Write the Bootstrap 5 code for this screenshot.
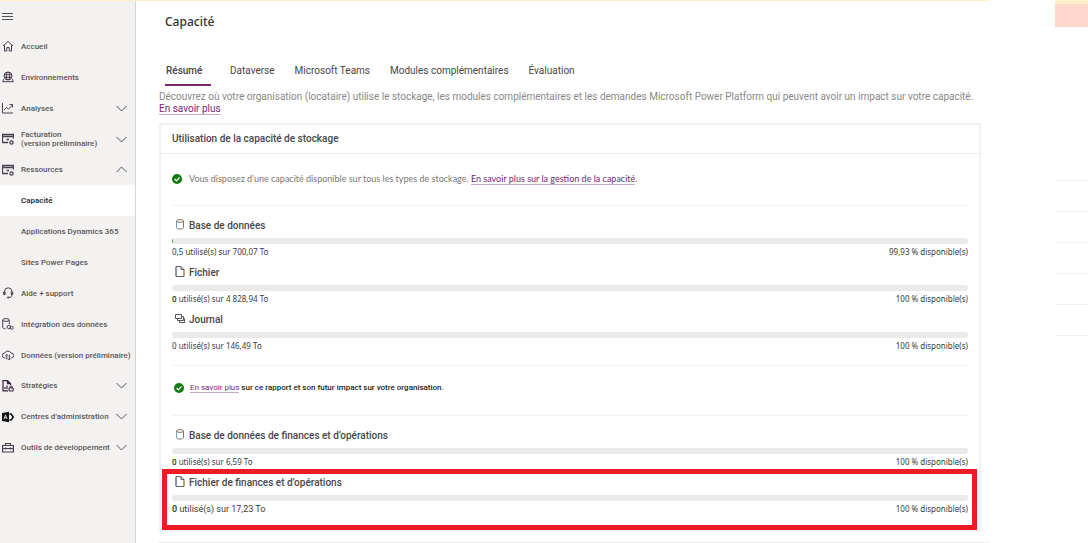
<!DOCTYPE html>
<html lang="fr">
<head>
<meta charset="utf-8">
<meta name="viewport" content="width=device-width, initial-scale=1">
<title>Capacité</title>
<link href="https://cdn.jsdelivr.net/npm/bootstrap@5.3.0/dist/css/bootstrap.min.css" rel="stylesheet">
<style>
  body { font-family: Roboto, "Noto Sans", sans-serif; font-size: 10px; line-height: 12px; color: #3b3a39; background: #fff; }
  svg { flex: none; fill: none; stroke: #4b3f52; }
  a { color: #742774; text-decoration: none; }
  a:hover { color: #4b164b; }
  .shell { border-top: 1px solid #fff0cc; margin-right: 66px; min-width: 0; }
  .sidebar { width: 136px; background: #f3f2f1; border-right: 1px solid #d6d5d8; }
  .menu-btn { width: 16px; height: 32px; padding: 0; border: 0; background: none; margin-bottom: -2px; }
  .side-list { min-height: 432px; }
  .side-link { display: flex; align-items: center; flex: 1 1 0; color: #5a5856; font-size: 8px; line-height: 9px; font-weight: 500; padding: 0 8px 0 2px; white-space: nowrap; }
  .side-link span { margin-left: 7px; }
  .side-link.sub { padding-left: 14px; }
  .side-link.current { background: #fff; color: #323130; font-weight: 600; }
  .chev { margin-left: auto; stroke: #55535a; }
  .page { padding: 0 8px 0 23px; }
  h1 { font: 500 12px/20px "Noto Sans", sans-serif; margin: 11px 0 23px 6px; color: #323130; }
  .tabs { gap: 19px; margin: 0 0 5px 6px; }
  .tabs a { color: #484644; height: 31px; line-height: 32px; border-bottom: 2px solid transparent; padding: 0 0 0 1px; }
  .tabs a.active { border-color: #742774; font-weight: 500; width: 46px; margin-right: -1px; }
  .lead-in { color: #8a8886; margin: 0 0 8px; }
  .under { border-bottom: 1px solid #c9a5ca; }
  .usage { border: 2px solid #f0f0f0; border-radius: 3px; --bs-card-color: inherit; }
  .usage h2 { font-size: 10px; font-weight: 500; line-height: 28px; margin: 0; padding: 0 11px; border-bottom: 1px solid #ebe9e8; color: #484644; }
  .usage-body { padding: 0 11px 7px; }
  .notice { height: 51px; gap: 7px; }
  .notice.wide { font: 9px/12px Lato, sans-serif; color: #797775; padding-bottom: 2px; }
  .notice.tight { height: 49px; gap: 6px; padding: 0 0 5px 2px; font-size: 8px; font-weight: 500; color: #201f1e; }
  .meters { border-top: 1px solid #f3f2f1; padding-top: 13px; }
  .meters-first { padding-bottom: 5px; }
  .meter { position: relative; height: 47px; }
  .meter h3 { font-size: 10px; font-weight: 500; line-height: 14px; margin: 0 0 5px; gap: 4px; padding-left: 3px; color: #484644; }
  .meter h3 svg { margin-bottom: 3px; }
  .progress { height: 6px; border-radius: 3px; background: #ebeae8; margin-bottom: 2px; }
  .progress-bar { background: #4ca64c; }
  .figures { font: 8px/12px "Noto Sans", sans-serif; }
  .figures b { font-weight: 600; }
  .figures .roomy { font: 9px/12px Roboto, sans-serif; }
  .marker { position: absolute; inset: -7px -9px -7px -10px; border: 5px solid #ed1c24; pointer-events: none; }
  .next-panel { border-top: 2px solid #ebebeb; margin: 10px -8px 0 0; }
  .rail { width: 33px; flex: none; }
  .rail-warn { height: 4px; background: #fff0cc; }
  .rail-error { height: 23px; background: #ffd7cc; margin-bottom: 153px; }
  .rail-row { height: 31px; border-top: 1px solid #f0efee; }
</style>
</head>
<body>
<svg class="d-none">
  <symbol id="chev-down" viewBox="0 0 11 7"><path d="M.5 1 5.5 6l5-5"/></symbol>
  <symbol id="db" viewBox="0 0 9 11"><path d="M1 2v6.500c0 .8 1.200 1.500 3.500 1.500S8 9.300 8 8.500V2" stroke="#76757c"/><ellipse cx="4.500" cy="2" rx="3.500" ry="1.400" stroke="#8b7565"/><path d="M1 3v5" stroke="#6fa5cf"/></symbol>
  <symbol id="file" viewBox="0 0 9 11"><path d="M.5.500h5l3 3v7h-8z" stroke="#625f66"/><path d="M5.500.500v3h3" stroke="#625f66"/><path d="M.500 1v9" stroke="#627e9f"/><path d="M8.500 5v5" stroke="#c99258"/></symbol>
  <symbol id="ok" viewBox="0 0 10 10"><circle cx="5" cy="5" r="5" fill="#107c10" stroke="none"/><path d="m2.600 5 1.800 1.800L7.500 3.500" stroke="#fff" stroke-width="1.200"/></symbol>
  <symbol id="bill" viewBox="0 0 12 12"><path d="M6 9.500H.5v-8h11v4M.5 3.500h11M4.500 6.500h2.500" stroke-width="1.300"/><circle cx="9.500" cy="9.500" r="1.600" stroke-width="1.300"/></symbol>
</svg>
<div class="d-flex min-vh-100">
  <div class="shell d-flex flex-grow-1">
    <nav class="sidebar d-flex flex-column flex-shrink-0" aria-label="Navigation principale">
      <button class="menu-btn d-flex align-items-center" type="button" aria-label="Menu"><svg width="14" height="10" viewBox="0 0 14 10"><path d="M2 1.500h11M2 4.500h11M2 7.500h11" stroke="#555"/></svg></button>
      <div class="side-list d-flex flex-column">
        <a class="side-link" href="#"><svg width="12" height="12" viewBox="0 0 12 12"><path d="M1 6 6 1.500 11 6M2.500 5v6h2.300V7.500h2.400V11h2.300V5"/></svg><span>Accueil</span></a>
        <a class="side-link" href="#"><svg width="12" height="12" viewBox="0 0 12 12"><circle cx="6" cy="5" r="4"/><ellipse cx="6" cy="5" rx="1.700" ry="4"/><path d="M2.300 3.800h7.400M2.300 6.300h7.400M1.800 8 .7 10.700h10.600L10.200 8"/></svg><span>Environnements</span></a>
        <a class="side-link" href="#"><svg width="12" height="12" viewBox="0 0 12 12"><path d="M.5 1v10H11M2 8l2.500-2.500 2 1.500L10.500 3M7.500 2.500h3v3"/></svg><span>Analyses</span><svg class="chev" width="11" height="7"><use href="#chev-down"/></svg></a>
        <a class="side-link" href="#"><svg width="12" height="12"><use href="#bill"/></svg><span>Facturation<br>(version préliminaire)</span><svg class="chev" width="11" height="7"><use href="#chev-down"/></svg></a>
        <a class="side-link" href="#"><svg width="12" height="12"><use href="#bill"/></svg><span>Ressources</span><svg class="chev" width="11" height="7" viewBox="0 0 11 7"><path d="m.5 6 5-5 5 5"/></svg></a>
        <a class="side-link sub current" href="#" aria-current="page"><span>Capacité</span></a>
        <a class="side-link sub" href="#"><span>Applications Dynamics 365</span></a>
        <a class="side-link sub" href="#"><span>Sites Power Pages</span></a>
        <a class="side-link" href="#"><svg width="12" height="12" viewBox="0 0 12 12"><path d="M2.500 7.500V4.500a3.700 3.700 0 0 1 7.400 0v3M2.500 5H1.600v2.500h1.500V5zM9.900 5h.9v2.500H9.300V5zM9.900 7.500C9.900 9.500 9 10.500 7 10.500"/><circle cx="6.200" cy="10.500" r=".8"/></svg><span>Aide + support</span></a>
        <a class="side-link" href="#"><svg width="12" height="12" viewBox="0 0 12 12"><ellipse cx="4" cy="2" rx="3.300" ry="1.400"/><path d="M.7 2v7.500c0 .7 1.300 1.300 3 1.300M7.300 2v4"/><circle cx="6.800" cy="9" r="1.700"/><circle cx="9.700" cy="9.800" r="1.500"/></svg><span>Intégration des données</span></a>
        <a class="side-link" href="#"><svg width="12" height="12" viewBox="0 0 12 12"><path d="M3.500 9H3a2.500 2.500 0 0 1-.3-5A3.500 3.500 0 0 1 9 4a2.500 2.500 0 0 1 .3 5M4.800 10.500V5.500M3.500 6.800l1.300-1.300 1 1M7.300 5.500v5.500M6.300 9.800l1 1.200 1.200-1.200"/></svg><span>Données (version préliminaire)</span></a>
        <a class="side-link" href="#"><svg width="12" height="12" viewBox="0 0 12 12" style="stroke:#35203f"><path d="M6 10.800H1V.7h4.500L8.500 3.500V5M5.500.7v3h3M3 9V7M5 9V5.500" stroke-width="1.200"/><path d="M7 8h4.200v3H7zM8 8V6.800c0-1.200 2.200-1.200 2.200 0V8"/></svg><span>Stratégies</span><svg class="chev" width="11" height="7"><use href="#chev-down"/></svg></a>
        <a class="side-link" href="#"><svg width="12" height="12" viewBox="0 0 12 12"><path d="M0 2 7 .7v10.600L0 10z" fill="#111" stroke="none"/><path d="M2 8 3.500 4 5 8M2.500 6.800h2" stroke="#fff" stroke-width=".8"/><path d="M7.500 3h1.700l2 3-2 3H7.500" stroke="#111" stroke-width="1.500"/></svg><span>Centres d’administration</span><svg class="chev" width="11" height="7"><use href="#chev-down"/></svg></a>
        <a class="side-link" href="#"><svg width="12" height="12" viewBox="0 0 12 12"><path d="M.6 3.500h10.800v6.500H.6zM3.500 3.500v-2h5v2M.6 6.500h10.800M3.500 5.500v2M8.500 5.500v2" stroke-width="1.200"/></svg><span>Outils de développement</span><svg class="chev" width="11" height="7"><use href="#chev-down"/></svg></a>
      </div>
    </nav>
    <main class="page flex-grow-1">
      <h1>Capacité</h1>
      <nav class="tabs d-flex" aria-label="Sections">
        <a class="active" href="#" aria-current="true">Résumé</a>
        <a href="#">Dataverse</a>
        <a href="#">Microsoft Teams</a>
        <a href="#">Modules complémentaires</a>
        <a href="#">Évaluation</a>
      </nav>
      <p class="lead-in">Découvrez où votre organisation (locataire) utilise le stockage, les modules complémentaires et les demandes Microsoft Power Platform qui peuvent avoir un impact sur votre capacité.<br><a class="under" href="#">En savoir plus</a></p>
      <section class="card usage">
        <h2>Utilisation de la capacité de stockage</h2>
        <div class="usage-body">
          <div class="notice wide d-flex align-items-center"><svg width="10" height="10"><use href="#ok"/></svg><span>Vous disposez d’une capacité disponible sur tous les types de stockage. <a class="under" href="#">En savoir plus sur la gestion de la capacité</a>.</span></div>
          <div class="meters meters-first">
            <div class="meter">
              <h3 class="d-flex align-items-center"><svg width="10" height="11"><use href="#db"/></svg>Base de données</h3>
              <div class="progress" role="progressbar" aria-label="Base de données" aria-valuenow="0.07" aria-valuemin="0" aria-valuemax="100"><div class="progress-bar" style="width: .14%"></div></div>
              <div class="figures d-flex justify-content-between"><span>0,5 utilisé(s) sur 700,07 To</span><span>99,93 % disponible(s)</span></div>
            </div>
            <div class="meter">
              <h3 class="d-flex align-items-center"><svg width="10" height="11"><use href="#file"/></svg>Fichier</h3>
              <div class="progress" role="progressbar" aria-label="Fichier" aria-valuenow="0" aria-valuemin="0" aria-valuemax="100"></div>
              <div class="figures d-flex justify-content-between"><span><b>0</b> utilisé(s) sur 4 828,94 To</span><span>100 % disponible(s)</span></div>
            </div>
            <div class="meter">
              <h3 class="d-flex align-items-center"><svg width="10" height="11" viewBox="0 0 10 11"><path d="M.5 1.500h6v4h-6zM2.500 5.500v2h6v-4h-2M4.500 7.500v2h5v-4h-1" stroke="#55535a"/></svg>Journal</h3>
              <div class="progress" role="progressbar" aria-label="Journal" aria-valuenow="0" aria-valuemin="0" aria-valuemax="100"></div>
              <div class="figures d-flex justify-content-between"><span>0 utilisé(s) sur 146,49 To</span><span>100 % disponible(s)</span></div>
            </div>
          </div>
          <div class="meters pt-0"><div class="notice tight d-flex align-items-center"><svg width="10" height="10"><use href="#ok"/></svg><span><a class="under fw-normal" href="#">En savoir plus</a> sur ce rapport et son futur impact sur votre organisation.</span></div></div>
          <div class="meters">
            <div class="meter">
              <h3 class="d-flex align-items-center"><svg width="10" height="11"><use href="#db"/></svg>Base de données de finances et d’opérations</h3>
              <div class="progress" role="progressbar" aria-label="Base de données de finances et d’opérations" aria-valuenow="0" aria-valuemin="0" aria-valuemax="100"></div>
              <div class="figures d-flex justify-content-between"><span><b>0</b> utilisé(s) sur 6,59 To</span><span>100 % disponible(s)</span></div>
            </div>
            <div class="meter">
              <h3 class="d-flex align-items-center"><svg width="10" height="11"><use href="#file"/></svg>Fichier de finances et d’opérations</h3>
              <div class="progress" role="progressbar" aria-label="Fichier de finances et d’opérations" aria-valuenow="0" aria-valuemin="0" aria-valuemax="100"></div>
              <div class="figures d-flex justify-content-between"><span class="roomy"><b>0</b> utilisé(s) sur 17,23 To</span><span>100 % disponible(s)</span></div>
              <div class="marker"></div>
            </div>
          </div>
        </div>
      </section>
      <section class="next-panel"></section>
    </main>
  </div>
  <aside class="rail">
    <div class="rail-warn"></div>
    <div class="rail-error"></div>
    <div class="rail-row"></div>
    <div class="rail-row"></div>
    <div class="rail-row"></div>
    <div class="rail-row"></div>
    <div class="rail-row"></div>
    <div class="rail-row"></div>
  </aside>
</div>
<script src="https://cdn.jsdelivr.net/npm/bootstrap@5.3.0/dist/js/bootstrap.bundle.min.js"></script>
</body>
</html>
